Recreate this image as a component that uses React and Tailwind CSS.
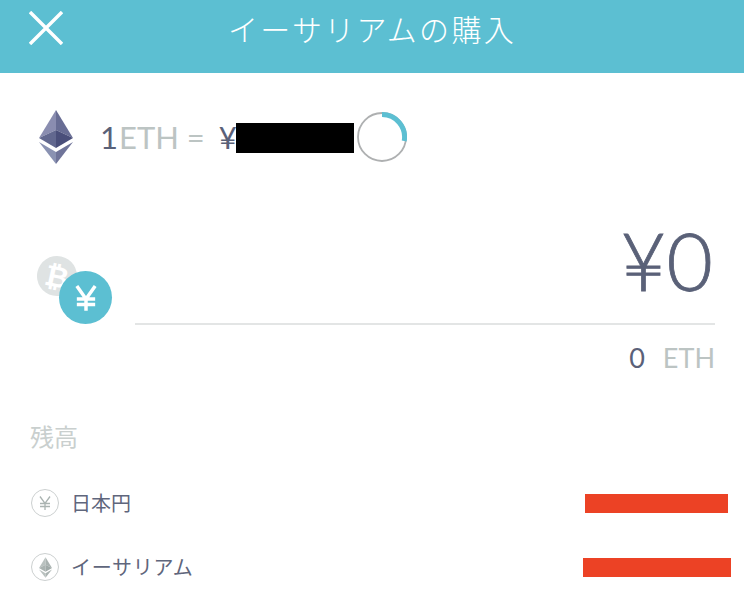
const cjk = '"Noto Sans CJK JP", "Lato", sans-serif';
const lat = '"Lato", "Noto Sans CJK JP", sans-serif';

function EthIcon({ className, mono }) {
  const c = mono
    ? ['#b9c1bf', '#aab3b1', '#aab3b1', '#a0aaa8', '#b9c1bf', '#aab3b1']
    : ['#8a8db0', '#686d94', '#62688f', '#4a4f7a', '#8a92b2', '#6f7499'];
  return (
    <svg viewBox="0 0 34 54" className={className}>
      <polygon points="17,0 0,28 17,20" fill={c[0]} />
      <polygon points="17,0 34,28 17,20" fill={c[1]} />
      <polygon points="0,28 17,20 17,38" fill={c[2]} />
      <polygon points="34,28 17,20 17,38" fill={c[3]} />
      <polygon points="0,32 17,42 17,54" fill={c[4]} />
      <polygon points="34,32 17,42 17,54" fill={c[5]} />
    </svg>
  );
}

function Yen({ className, color = '#fff', sw = 3 }) {
  return (
    <svg viewBox="0 0 24 28" className={className} fill="none" stroke={color} strokeWidth={sw}>
      <path d="M2 1 L12 15 L22 1 M12 15 V28 M2 15 H22 M2 21 H22" />
    </svg>
  );
}

export default function App() {
  return (
    <div className="w-[744px] h-[609px] bg-white overflow-hidden" style={{ fontFamily: lat }}>
      <header className="h-[73px] bg-[#5cbfd2] relative flex items-center justify-center pb-[17px]">
        <svg viewBox="0 0 34 34" className="absolute left-[29px] top-[11px] w-[34px] h-[34px]" stroke="#fff" strokeWidth="3.4" fill="none">
          <path d="M1 1 L33 33 M33 1 L1 33" />
        </svg>
        <h1 className="text-[30px] font-light text-white tracking-[2.3px] leading-none" style={{ fontFamily: cjk }}>イーサリアムの購入</h1>
      </header>

      <section className="flex items-center pl-[39px] pt-[37px] h-[91px]">
        <EthIcon className="w-[34px] h-[54px]" />
        <div className="ml-[27px] w-[136px] shrink-0 flex items-center text-[31px] leading-none whitespace-nowrap">
          <span className="text-[#5a6178]">1</span>
          <span className="text-[#bcc4c3] ml-[1px]">ETH =</span>
          <span className="text-[#5a6178] ml-[14px]">¥</span>
        </div>
        <div className="w-[118px] h-[30px] mt-[2px] bg-black" />
        <svg viewBox="0 0 50 50" className="w-[50px] h-[50px] ml-[3px]" fill="none">
          <circle cx="25" cy="25" r="24" stroke="#aeb0b1" strokeWidth="1.8" />
          <path d="M25 2.5 A22.5 22.5 0 0 1 47.2 29" stroke="#5cbfd2" strokeWidth="5" />
        </svg>
      </section>

      <section className="flex mt-[41px] pl-[36px] pr-[29px]">
        <div className="relative w-[99px] h-[100px] shrink-0">
          <div className="absolute left-[1px] top-[51px] w-[40px] h-[40px] rounded-full bg-[#dfe3e3] flex items-center justify-center text-white text-[29px] font-bold rotate-12">₿</div>
          <div className="absolute left-[23px] top-[66px] w-[53px] h-[53px] rounded-full bg-[#5cbfd2] flex items-center justify-center">
            <Yen className="w-[22px] h-[30px]" sw="3.8" />
          </div>
        </div>
        <div className="flex-1 min-w-0">
          <div className="h-[120px] border-b-2 border-[#e3e5e5] flex items-start justify-end pr-[2px] pt-[15px] text-[#5a6178] text-[80px] leading-none font-light [-webkit-text-stroke:0.8px_#5a6178]">
            <span>¥0</span>
          </div>
          <div className="flex justify-end items-center mt-[17px] h-[30px] text-[27px] leading-none">
            <span className="text-[#5a6178]">0</span>
            <span className="text-[#bcc4c3] ml-[18px]">ETH</span>
          </div>
        </div>
      </section>

      <section className="mt-[52px] pl-[30px]" style={{ fontFamily: cjk }}>
        <h2 className="text-[24px] text-[#c9cfce] leading-none h-[24px]">残高</h2>
        <div className="flex items-center mt-[41px] h-[28px]">
          <span className="w-[28px] h-[28px] ml-[1px] rounded-full border border-[#ccd0d0] flex items-center justify-center">
            <Yen className="w-[12px] h-[14px]" color="#aab3b1" sw="2.6" />
          </span>
          <span className="ml-[12px] text-[20px] text-[#5f667c] leading-none">日本円</span>
          <span className="ml-auto mr-[16px] w-[143px] h-[19px] bg-[#ec4225]" />
        </div>
        <div className="flex items-center mt-[36px] h-[28px]">
          <span className="w-[28px] h-[28px] ml-[1px] rounded-full border border-[#ccd0d0] flex items-center justify-center">
            <EthIcon className="w-[13px] h-[21px]" mono />
          </span>
          <span className="ml-[12px] text-[20px] text-[#5f667c] leading-none tracking-[0.7px]">イーサリアム</span>
          <span className="ml-auto mr-[13px] w-[148px] h-[19px] bg-[#ec4225]" />
        </div>
      </section>
    </div>
  );
}
